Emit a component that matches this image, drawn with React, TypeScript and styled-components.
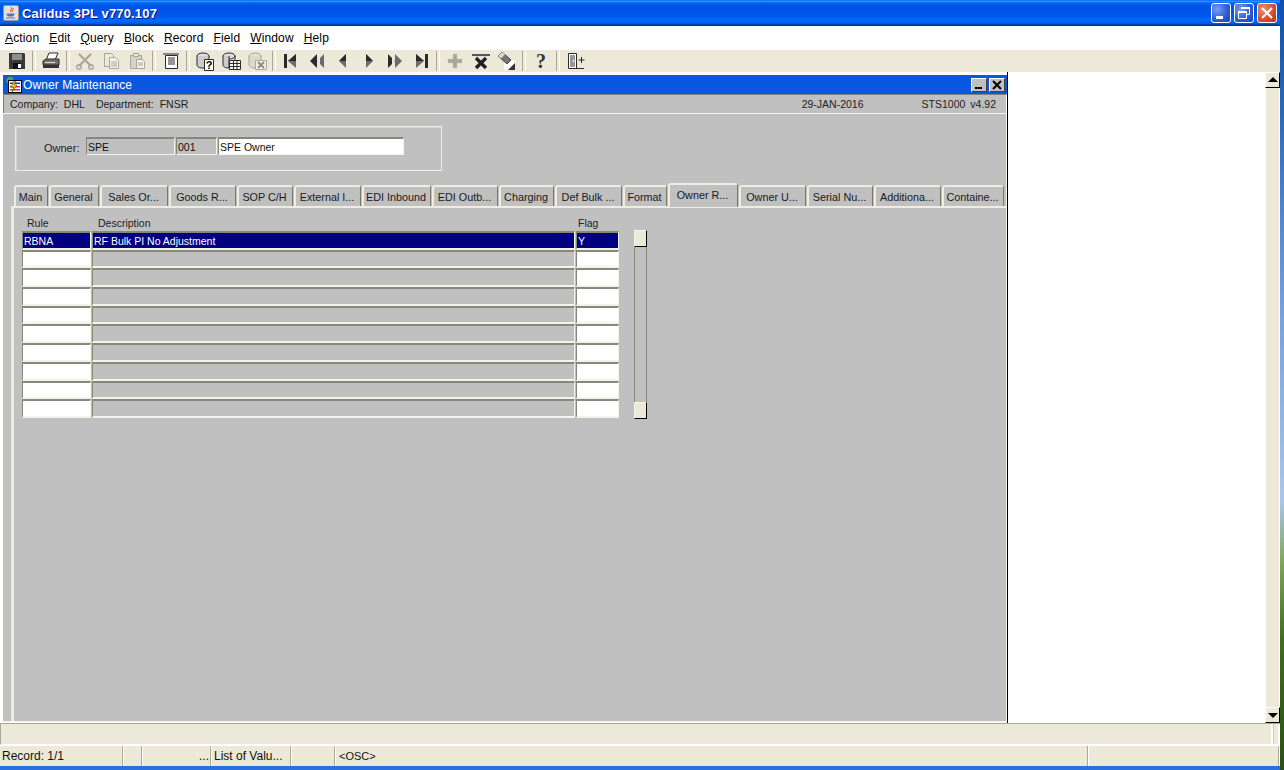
import React from "react";
import styled, { createGlobalStyle } from "styled-components";

const Global = createGlobalStyle`
  html, body { margin: 0; padding: 0; width: 1284px; height: 770px; overflow: hidden; }
  #root { width: 1284px; height: 770px; }
  * { box-sizing: border-box; }
`;

const Screen = styled.div`
  width: 1284px; height: 770px; display: flex;
  font-family: "Liberation Sans", Arial, sans-serif; font-size: 11px; color: #000;
`;
const AppWindow = styled.div`
  width: 1280px; height: 770px; display: flex; flex-direction: column; background: #fff;
`;
const Wallpaper = styled.div`
  width: 4px; height: 770px;
  background: linear-gradient(#0f4fa8 0, #2a6bc0 120px, #6d9fe0 300px, #a9c6ee 500px, #7fa860 560px, #3f6b22 640px, #2c4f18 770px);
`;
const TitleBar = styled.div`
  height: 26px; flex: none; display: flex; align-items: center; padding: 0 3px 0 3px;
  background: linear-gradient(#0058ee 0, #3593ff 4%, #288eff 6%, #127dff 8%, #036ffc 10%, #0262ee 14%, #0057e5 20%, #0054e3 24%, #0055eb 56%, #005bf5 66%, #026afe 76%, #0062ef 86%, #0052d6 92%, #0040ab 94%, #003092 100%);
`;
const TitleText = styled.div`
  margin-left: 3px; flex: 1; color: #fff; font-size: 13px; font-weight: 700; letter-spacing: 0.15px;
  text-shadow: 1px 1px 0 #0f1089;
`;
const CaptionButton = styled.div<{ $close?: boolean }>`
  width: 20px; height: 20px; margin-left: 3px; border: 1px solid #fff; border-radius: 3px;
  display: flex; align-items: center; justify-content: center;
  background: ${(p) => p.$close
    ? "radial-gradient(circle at 30% 30%, #e8937c, #d9502e 55%, #b93210)"
    : "radial-gradient(circle at 30% 30%, #7a9cf0, #2f5fd8 55%, #1a3fb8)"};
`;
const MenuBar = styled.div`
  height: 24px; flex: none; display: flex; align-items: center; gap: 10px; padding: 0 0 0 5px; background: #fff;
  font-size: 12px; letter-spacing: 0.14px;
`;
const MenuItem = styled.span`
  white-space: nowrap;
  &::first-letter { text-decoration: underline; }
  display: inline-block;
`;
const Toolbar = styled.div`
  height: 22px; flex: none; display: flex; align-items: center; padding-left: 4px; background: #ece9d8;
`;
const ToolButton = styled.div`
  width: 26px; height: 22px; display: flex; align-items: center; justify-content: center;
`;
const ToolSep = styled.div`
  width: 8px; height: 20px; display: flex; justify-content: center;
  &::before { content: ""; width: 2px; height: 100%; border-left: 1px solid #aca899; border-right: 1px solid #fff; }
`;
const Workspace = styled.div`
  flex: 1; display: flex; min-height: 0; background: #fff; border-bottom: 1px solid #aca899;
`;
const MdiArea = styled.div`
  flex: 1; min-width: 0; display: flex; background: #fff;
`;
const FormWindow = styled.div`
  width: 1008px; display: flex; flex-direction: column; padding: 3px 0 1px 3px;
  border-right: 1px solid #000; background: #fff;
`;
const FormCaption = styled.div`
  height: 19px; flex: none; display: flex; align-items: center; padding: 0 2px 0 2px;
  background: #0a58e0; color: #fff; font-size: 12px; letter-spacing: 0.1px;
`;
const CaptionTitle = styled.div` flex: 1; margin-left: 1px; `;
const MiniButton = styled.div`
  width: 16px; height: 14px; margin-left: 2px; background: #c0c0c0; display: flex; align-items: center; justify-content: center;
  border: 1px solid; border-color: #fff #404040 #404040 #fff;
`;
const InfoBar = styled.div`
  height: 19px; flex: none; display: flex; align-items: flex-end; padding: 0 10px 3px 6px; background: #c0c0c0;
  border-left: 1px solid #808080; border-top: 1px solid #808080; color: #222; border-right: 1px solid #fff;
  font-size: 10.5px;
`;
const InfoGap = styled.span<{ $w: number }>` margin-left: ${(p) => p.$w}px; `;
const InfoSpacer = styled.span` flex: 1; `;
const FormBody = styled.div`
  flex: 1; min-height: 0; display: flex; flex-direction: column; background: #c0c0c0;
  border-top: 1px solid #f4f4ec; border-right: 1px solid #f4f4ec; border-bottom: 1px solid #f4f4ec;
  padding: 12px 0 0 8px;
`;
const OwnerFrame = styled.div`
  width: 427px; height: 45px; margin-left: 4px; flex: none; display: flex; align-items: flex-start; padding: 10px 0 0 28px;
  border: 1px solid #efefe6; box-shadow: inset 1px 1px 0 #d4d4cc;
`;
const OwnerLabel = styled.span` width: 42px; padding-top: 5px; color: #222; `;
const Field = styled.div<{ $w: number; $white?: boolean }>`
  width: ${(p) => p.$w}px; height: 18px; flex: none; padding: 2px 0 0 1px; line-height: 13px; white-space: nowrap; overflow: hidden;
  border-style: solid; border-width: 2px 1px 1px 1px; border-color: #88887a #f4f4ec #f4f4ec #88887a;
  margin-right: 1px; font-size: 10.5px;
  background: ${(p) => (p.$white ? "#fff" : "#c0c0c0")};
  color: #111;
`;
const TabStrip = styled.div`
  height: 23px; flex: none; margin-top: 12px; padding-left: 3px; display: flex; align-items: flex-end;
`;
const Tab = styled.div<{ $w: number; $active?: boolean }>`
  width: ${(p) => p.$w - 1}px; height: ${(p) => (p.$active ? 24 : 21)}px; margin-right: 1px; margin-bottom: ${(p) => (p.$active ? -1 : 0)}px;
  padding: 0 2px ${(p) => (p.$active ? 2 : 0)}px 0; position: relative; z-index: ${(p) => (p.$active ? 1 : 0)};
  display: flex; align-items: center; justify-content: center; white-space: nowrap; color: #1a1a1a;
  font-size: 10.8px;
  border-style: solid; border-width: 2px 1px 0 2px; border-color: #efece0 #77776b transparent #efece0;
  border-radius: 3px 3px 0 0;
  background: #c0c0c0;
`;
const TabPage = styled.div`
  flex: 1; min-height: 0; border-top: 2px solid #efece0; border-left: 3px solid #efece0; padding: 9px 0 0 8px;
`;
const TableRow = styled.div`
  display: flex; align-items: flex-start;
`;
const Table = styled.div``;
const HeadRow = styled.div`
  display: grid; grid-template-columns: 70px 484px 44px; height: 14px; padding-bottom: 2px; align-items: center; color: #222;
  font-size: 10.5px;
`;
const HeadCell = styled.span<{ $pad: number }>` padding-left: ${(p) => p.$pad}px; `;
const Rows = styled.div`
  display: grid; grid-template-columns: 70px 484px 44px; grid-template-rows: repeat(10, 18.7px);
`;
const Cell = styled.div<{ $tone: "white" | "grey" | "navy" }>`
  border-style: solid; border-width: 2px 1px 2px 1px; border-color: #88887a #f4f4ec #f4f4ec #88887a; margin-right: 1px;
  padding: 2px 0 0 1px; line-height: 12px; font-size: 10.5px; overflow: hidden; white-space: nowrap;
  background: ${(p) => (p.$tone === "navy" ? "#000080" : p.$tone === "white" ? "#fff" : "#c0c0c0")};
  color: ${(p) => (p.$tone === "navy" ? "#fff" : "#000")};
`;
const VScroll = styled.div`
  margin: 13px 0 0 14px; width: 13px; height: 189px; display: flex; flex-direction: column; justify-content: space-between;
  border-left: 1px solid #88887a; border-right: 1px solid #88887a; background: #c0c0c0;
`;
const VThumb = styled.div`
  height: 17px; margin: 0 -1px; background: #ece9d8; border: 1px solid; border-color: #f4f4ec #000 #000 #f4f4ec;
`;
const SideScroll = styled.div`
  width: 16px; flex: none; display: flex; flex-direction: column; background: #ece9d8; border-left: 1px solid #fff;
`;
const ScrollButton = styled.div`
  height: 16px; flex: none; display: flex; align-items: center; justify-content: center; background: #ece9d8;
  border: 1px solid; border-color: #fff #000 #000 #fff;
`;
const ScrollTrack = styled.div` flex: 1; background: #ece9d8; border-left: 1px solid #fff; border-right: 1px solid #fff; `;
const MessageBar = styled.div`
  height: 21px; flex: none; display: flex; justify-content: flex-end; background: #ece9d8; border-left: 1px solid #aca899;
  border-bottom: 1px solid #fff;
`;
const MessageEnd = styled.div`
  width: 9px; border-left: 2px solid #fff; border-right: 2px solid #fff; box-shadow: inset 1px 0 0 #d0ccb8; background: #ece9d8;
`;
const StatusBar = styled.div`
  height: 21px; flex: none; display: flex; background: #ece9d8; border-top: 1px solid #fff; font-size: 12px;
`;
const StatusCell = styled.div<{ $w?: number; $right?: boolean; $small?: boolean }>`
  ${(p) => (p.$w ? `width: ${p.$w}px; flex: none;` : "flex: 1;")}
  display: flex; align-items: center; padding: 0 2px 0 ${(p) => (p.$small ? 3 : 2)}px; white-space: nowrap; color: #111;
  justify-content: ${(p) => (p.$right ? "flex-end" : "flex-start")};
  font-size: ${(p) => (p.$small ? 11 : 12)}px;
  border-right: 1px solid #fff; box-shadow: inset -1px 0 0 #aca899;
`;
const BottomEdge = styled.div` height: 4px; flex: none; background: #2a6fdc; `;

const Ico = styled.svg<{ $w?: number; $h?: number }>`
  display: block; width: ${(p) => p.$w ?? 20}px; height: ${(p) => p.$h ?? 20}px; flex: none; overflow: visible;
`;

const D = "#2b2b2b";
const G = "#a9a79c";
const M = "#6b6b6b";

const icons: Record<string, React.ReactNode> = {
  save: (<>
    <path d="M2 2h15l1 1v15H2z" fill="#3a3a3a" />
    <path d="M5 3h10v6H5z" fill="#8e8e8e" />
    <path d="M6 12h8v6H6z" fill="#111" /><path d="M11 13h3v4h-3z" fill="#fff" />
  </>),
  print: (<>
    <path d="M8 2h9l-3 7H5z" fill="#fff" stroke={D} />
    <path d="M2 10l3-2h13v6H2z" fill="#707070" stroke={D} />
    <path d="M2 14h16v3H2z" fill="#333" /><path d="M4 11h10v1H4z" fill="#ddd" />
  </>),
  cut: (<>
    <path d="M4 3l12 12M16 3L4 15" stroke={G} strokeWidth="2.2" fill="none" />
    <circle cx="4" cy="16" r="2.3" fill="none" stroke={G} strokeWidth="1.4" /><circle cx="16" cy="16" r="2.3" fill="none" stroke={G} strokeWidth="1.4" />
  </>),
  copy: (<>
    <path d="M3.5 2.5h7l2 2v11h-9z" fill="#ece9d8" stroke={G} />
    <path d="M8.5 6.5h6l3 3v8h-9z" fill="#f4f2e8" stroke={G} />
    <path d="M10 11h6M10 13h6M10 15h6" stroke={G} />
  </>),
  paste: (<>
    <path d="M3.5 4.5h11v13h-11z" fill="#d6d4c8" stroke={G} />
    <path d="M6.5 2.5h5v3h-5z" fill="#ece9d8" stroke={G} />
    <path d="M9.5 8.5h6l2 2v7h-8z" fill="#f4f2e8" stroke={G} />
    <path d="M11 12h5M11 14h5" stroke={G} />
  </>),
  list: (<>
    <path d="M2 2h16v2H2z" fill="#888" />
    <path d="M4.5 4.5h12v13h-12z" fill="#fff" stroke={D} />
    <path d="M7 7h7M7 9h7M7 11h7M7 13h7" stroke={D} />
  </>),
  query: (<>
    <ellipse cx="8" cy="5" rx="6" ry="3" fill="#ddd" stroke={D} />
    <path d="M2 5v9c0 2 3 3 6 3s6-1 6-3V5" fill="#ccc" stroke={D} />
    <path d="M9.5 8.5h9v11h-9z" fill="#fff" stroke={D} />
    <text x="14" y="18" textAnchor="middle" fontSize="11" fontWeight="700" fontFamily="Liberation Sans" fill="#000">?</text>
  </>),
  exec: (<>
    <ellipse cx="8" cy="5" rx="6" ry="3" fill="#ddd" stroke={D} />
    <path d="M2 5v9c0 2 3 3 6 3V5" fill="#ccc" stroke={D} /><path d="M14 5v4" stroke={D} />
    <path d="M8.5 9.5h11v9h-11zM8.5 12.5h11M8.5 15.5h11M12.5 9.5v9M16 9.5v9" fill="#fff" stroke={D} />
  </>),
  cancel: (<>
    <ellipse cx="8" cy="5" rx="6" ry="3" fill="#e4e2d6" stroke={G} />
    <path d="M2 5v9c0 2 3 3 6 3s6-1 6-3V5" fill="#dcdacd" stroke={G} />
    <path d="M8.5 9.5h11v9h-11z" fill="#f4f2e8" stroke={G} />
    <path d="M11 11l6 6M17 11l-6 6" stroke="#8f8d83" strokeWidth="2" />
  </>),
  first: (<><path d="M3 3h3v14H3z" fill={D} /><path d="M15 3v14L7 10z" fill={M} /><path d="M15 3v7H7z" fill={D} /></>),
  prevb: (<><path d="M10 3v14L3 10z" fill={D} /><path d="M17 3v14l-7-7z" fill={M} /><path d="M13 6v8l-3-4z" fill="#ece9d8" /></>),
  prev: (<><path d="M13 3v14L6 10z" fill={M} /><path d="M13 3v7H6z" fill={D} /></>),
  next: (<><path d="M7 3v14l7-7z" fill={M} /><path d="M7 3v7h7z" fill={D} /></>),
  nextb: (<><path d="M3 3v14l7-7z" fill={D} /><path d="M10 3v14l7-7z" fill={M} /><path d="M7 6v8l3-4z" fill="#ece9d8" /></>),
  last: (<><path d="M5 3v14l8-7z" fill={M} /><path d="M5 3v7h8z" fill={D} /><path d="M14 3h3v14h-3z" fill={D} /></>),
  add: (<path d="M8 3h4v5h5v4h-5v5H8v-5H3V8h5z" fill="#a8a69a" stroke="#c8c6ba" strokeWidth="0.5" />),
  del: (<>
    <path d="M1 3h18v2H1z" fill="#555" /><path d="M3 5h14v1H3z" fill="#ddd" />
    <path d="M5 7l10 10M15 7L5 17" stroke="#222" strokeWidth="3.4" />
  </>),
  clear: (<>
    <path d="M7 9h11v10H7z" fill="#fff" /><path d="M18 12v7h-7z" fill="#333" />
    <path d="M1 5l4-4 9 8-4 4z" fill="#777" stroke={D} strokeWidth="0.8" />
    <path d="M1 5l4-4 3 2.6-4 4z" fill="#d8d8d0" />
  </>),
  help: (<text x="10" y="17" textAnchor="middle" fontSize="20" fontWeight="700" fontFamily="Liberation Serif" fill="#333">?</text>),
  exit: (<>
    <path d="M3.5 2.5h8v15h-8z" fill="#fff" stroke={D} />
    <path d="M5 4h5v12H5z" fill="#999" /><path d="M8 9h1v2H8z" fill="#fff" />
    <path d="M11 17.500h8" stroke={D} /><path d="M16.500 6v6M13.500 9h6" stroke={D} />
  </>),
};

const Tool = ({ name }: { name: string }) => (
  <ToolButton><Ico viewBox="0 0 20 20">{icons[name]}</Ico></ToolButton>
);

const toolbar = ["save", "|", "print", "|", "cut", "copy", "paste", "|", "list", "|", "query", "exec", "cancel", "|", "first", "prevb", "prev", "next", "nextb", "last", "|", "add", "del", "clear", "|", "help", "|", "exit"];

const JavaIcon = () => (
  <Ico viewBox="0 0 16 16" $w={16} $h={16}>
    <rect x="0.5" y="0.5" width="15" height="15" rx="1.5" fill="#e4e0d8" stroke="#9a968c" />
    <path d="M8 2c2 2-2 3 0 5M10 3c1 2-2 3-.5 4" stroke="#d8491e" fill="none" />
    <path d="M3.5 8.5h8c0 1.500-1 2.500-2 3h-4c-1-.5-2-1.500-2-3z" fill="#4a78b8" />
    <path d="M3 13h9" stroke="#4a78b8" />
  </Ico>
);
const FormIcon = () => (
  <Ico viewBox="0 0 17 17" $w={17} $h={17}>
    <circle cx="5" cy="4.500" r="4.200" fill="#4aa060" stroke="#146" strokeWidth="0.6" />
    <rect x="3.500" y="4.500" width="13" height="12" fill="#fff" stroke="#000" />
    <path d="M5 6.500h10V8H5z" fill="#2040c0" /><path d="M5 10h10v1.500H5zM5 13h10v1.500H5z" fill="#d83030" />
    <path d="M9 5l-3 6h3l-2 5 5-7H9l2-4z" fill="#ffd800" stroke="#000" strokeWidth="0.4" />
  </Ico>
);

const tabs: [string, number][] = [
  ["Main", 35], ["General", 51], ["Sales Or...", 69], ["Goods R...", 68], ["SOP C/H", 57], ["External I...", 68],
  ["EDI Inbound", 70], ["EDI Outb...", 67], ["Charging", 56], ["Def Bulk ...", 68], ["Format", 45], ["Owner R...", 71],
  ["Owner U...", 68], ["Serial Nu...", 67], ["Additiona...", 68], ["Containe...", 63],
];

const menus = ["Action", "Edit", "Query", "Block", "Record", "Field", "Window", "Help"];

export default function App() {
  return (
    <Screen>
      <Global />
      <AppWindow>
        <TitleBar>
          <JavaIcon />
          <TitleText>Calidus 3PL v770.107</TitleText>
          <CaptionButton>
            <Ico viewBox="0 0 18 18" $w={18} $h={18}><path d="M4 12h7v3H4z" fill="#fff" /></Ico>
          </CaptionButton>
          <CaptionButton>
            <Ico viewBox="0 0 18 18" $w={18} $h={18}><path d="M6.500 3.500h8v7h-3M3.500 7.500h8v7h-8zM3.500 8.500h8" stroke="#fff" fill="none" /><path d="M6 3h9v2H6z" fill="#fff" /></Ico>
          </CaptionButton>
          <CaptionButton $close>
            <Ico viewBox="0 0 18 18" $w={18} $h={18}><path d="M4 4l10 10M14 4L4 14" stroke="#fff" strokeWidth="2" /></Ico>
          </CaptionButton>
        </TitleBar>
        <MenuBar>
          {menus.map((m) => <MenuItem key={m}>{m}</MenuItem>)}
        </MenuBar>
        <Toolbar>
          {toolbar.map((t, i) => (t === "|" ? <ToolSep key={i} /> : <Tool key={i} name={t} />))}
        </Toolbar>
        <Workspace>
          <MdiArea>
            <FormWindow>
              <FormCaption>
                <FormIcon />
                <CaptionTitle>Owner Maintenance</CaptionTitle>
                <MiniButton><Ico viewBox="0 0 14 12" $w={14} $h={12}><path d="M3 8h7v2H3z" fill="#000" /></Ico></MiniButton>
                <MiniButton><Ico viewBox="0 0 14 12" $w={14} $h={12}><path d="M3 2l8 8M11 2l-8 8" stroke="#000" strokeWidth="2" /></Ico></MiniButton>
              </FormCaption>
              <InfoBar>
                <span>Company:</span><InfoGap $w={6}>DHL</InfoGap>
                <InfoGap $w={11}>Department:</InfoGap><InfoGap $w={6}>FNSR</InfoGap>
                <InfoSpacer />
                <span>29-JAN-2016</span><InfoGap $w={58}>STS1000</InfoGap><InfoGap $w={5}>v4.92</InfoGap>
              </InfoBar>
              <FormBody>
                <OwnerFrame>
                  <OwnerLabel>Owner:</OwnerLabel>
                  <Field $w={89}>SPE</Field>
                  <Field $w={41}>001</Field>
                  <Field $w={186} $white>SPE Owner</Field>
                </OwnerFrame>
                <TabStrip>
                  {tabs.map(([t, w]) => <Tab key={t} $w={w} $active={t === "Owner R..."}>{t}</Tab>)}
                </TabStrip>
                <TabPage>
                  <TableRow>
                    <Table>
                      <HeadRow>
                        <HeadCell $pad={5}>Rule</HeadCell>
                        <HeadCell $pad={6}>Description</HeadCell>
                        <HeadCell $pad={2}>Flag</HeadCell>
                      </HeadRow>
                      <Rows>
                        <Cell $tone="navy">RBNA</Cell>
                        <Cell $tone="navy">RF Bulk PI No Adjustment</Cell>
                        <Cell $tone="navy">Y</Cell>
                        {Array.from({ length: 9 }).flatMap((_, i) => [
                          <Cell key={`a${i}`} $tone="white" />,
                          <Cell key={`b${i}`} $tone="grey" />,
                          <Cell key={`c${i}`} $tone="white" />,
                        ])}
                      </Rows>
                    </Table>
                    <VScroll><VThumb /><VThumb /></VScroll>
                  </TableRow>
                </TabPage>
              </FormBody>
            </FormWindow>
          </MdiArea>
          <SideScroll>
            <ScrollButton><Ico viewBox="0 0 10 6" $w={10} $h={6}><path d="M5 0l5 5H0z" fill="#000" /></Ico></ScrollButton>
            <ScrollTrack />
            <ScrollButton><Ico viewBox="0 0 10 6" $w={10} $h={6}><path d="M5 6L0 1h10z" fill="#000" /></Ico></ScrollButton>
          </SideScroll>
        </Workspace>
        <MessageBar><MessageEnd /></MessageBar>
        <StatusBar>
          <StatusCell $w={124}>Record: 1/1</StatusCell>
          <StatusCell $w={19} />
          <StatusCell $w={69} $right>...</StatusCell>
          <StatusCell $w={80}>List of Valu...</StatusCell>
          <StatusCell $w={44} />
          <StatusCell $w={753} $small>&lt;OSC&gt;</StatusCell>
          <StatusCell />
        </StatusBar>
        <BottomEdge />
      </AppWindow>
      <Wallpaper />
    </Screen>
  );
}
